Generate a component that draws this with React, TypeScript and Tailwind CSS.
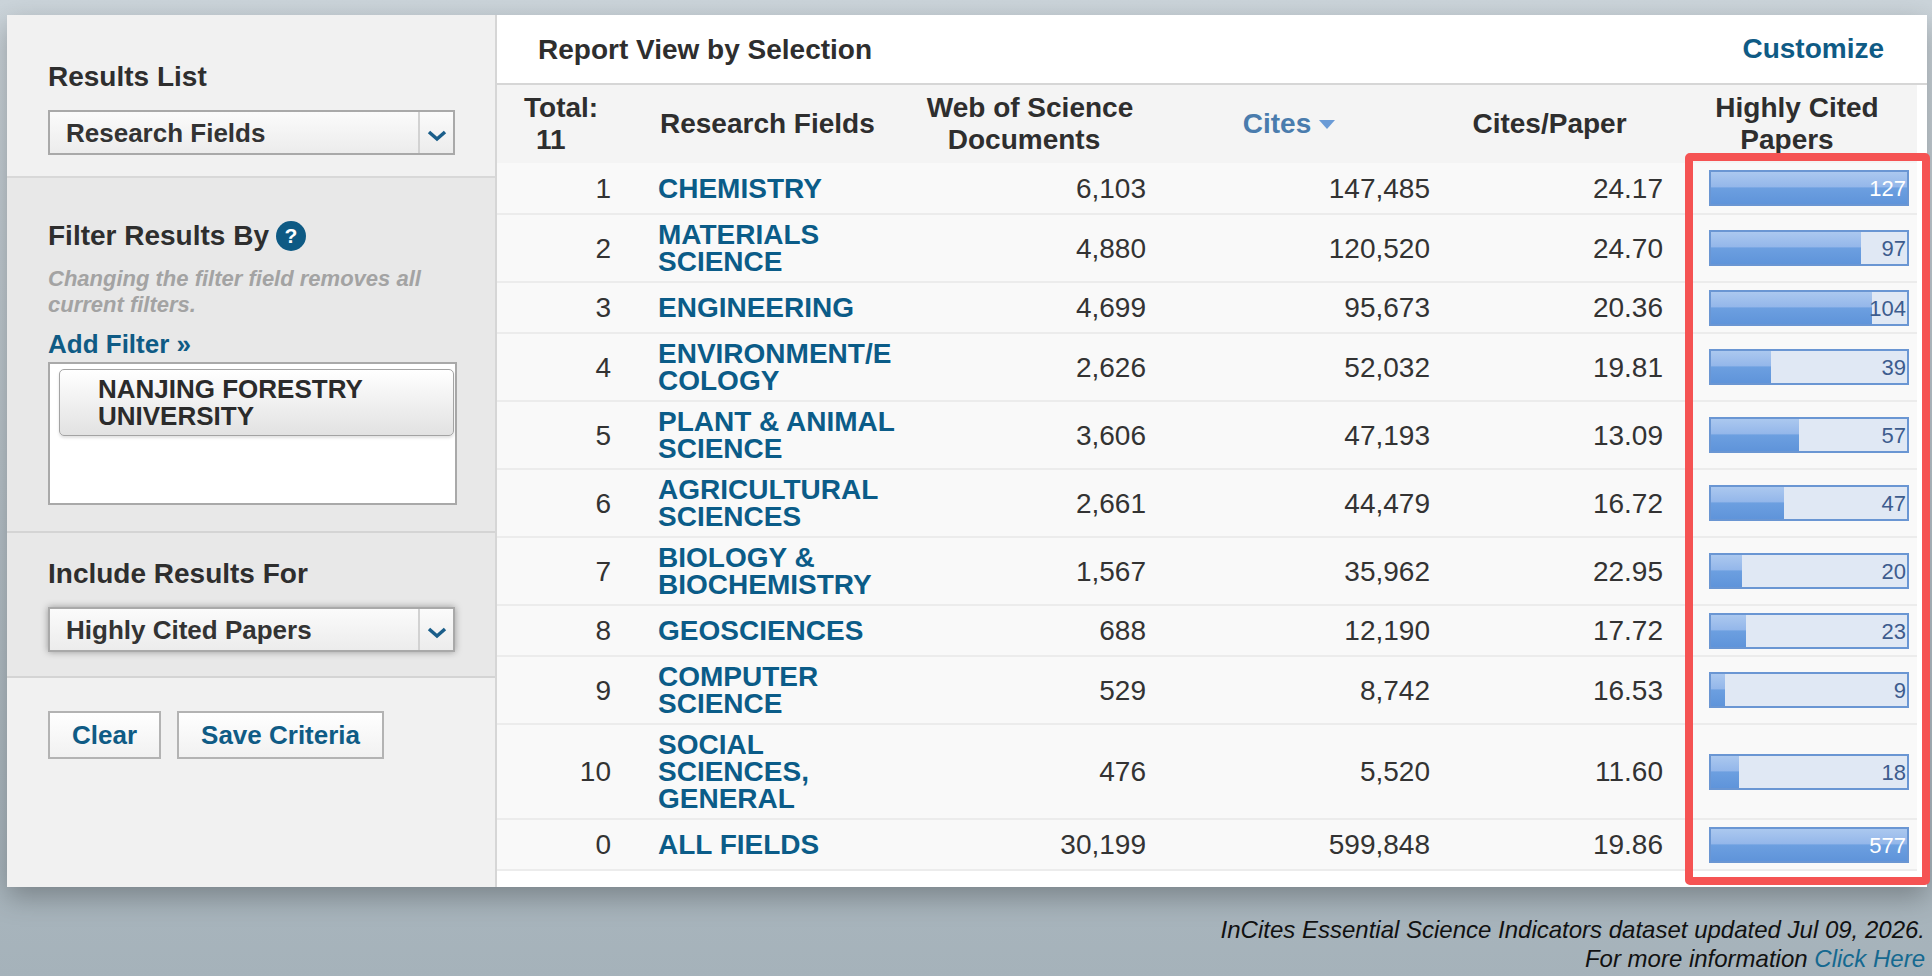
import React from 'react';

type Row = {
    rank: number;
    field: string[];
    docs: string;
    cites: string;
    cpp: string;
    hc: number;
    max: number;
};

const ROWS: Row[] = [
    { rank: 1, field: ['CHEMISTRY'], docs: '6,103', cites: '147,485', cpp: '24.17', hc: 127, max: 127 },
    { rank: 2, field: ['MATERIALS', 'SCIENCE'], docs: '4,880', cites: '120,520', cpp: '24.70', hc: 97, max: 127 },
    { rank: 3, field: ['ENGINEERING'], docs: '4,699', cites: '95,673', cpp: '20.36', hc: 104, max: 127 },
    { rank: 4, field: ['ENVIRONMENT/E', 'COLOGY'], docs: '2,626', cites: '52,032', cpp: '19.81', hc: 39, max: 127 },
    { rank: 5, field: ['PLANT & ANIMAL', 'SCIENCE'], docs: '3,606', cites: '47,193', cpp: '13.09', hc: 57, max: 127 },
    { rank: 6, field: ['AGRICULTURAL', 'SCIENCES'], docs: '2,661', cites: '44,479', cpp: '16.72', hc: 47, max: 127 },
    { rank: 7, field: ['BIOLOGY &', 'BIOCHEMISTRY'], docs: '1,567', cites: '35,962', cpp: '22.95', hc: 20, max: 127 },
    { rank: 8, field: ['GEOSCIENCES'], docs: '688', cites: '12,190', cpp: '17.72', hc: 23, max: 127 },
    { rank: 9, field: ['COMPUTER', 'SCIENCE'], docs: '529', cites: '8,742', cpp: '16.53', hc: 9, max: 127 },
    { rank: 10, field: ['SOCIAL', 'SCIENCES,', 'GENERAL'], docs: '476', cites: '5,520', cpp: '11.60', hc: 18, max: 127 },
    { rank: 0, field: ['ALL FIELDS'], docs: '30,199', cites: '599,848', cpp: '19.86', hc: 577, max: 577 },
];

const Chevron: React.FC = () => (
    <svg width="22" height="14" viewBox="0 0 22 14">
        <polyline points="3,4 11,11 19,4" fill="none" stroke="#1b5e8a" strokeWidth="3.5" strokeLinejoin="miter" />
    </svg>
);

const FakeSelect: React.FC<{ label: string; shadow?: boolean }> = ({ label, shadow }) => (
    <div className={`flex w-[407px] h-[45px] border-2 border-[#a9a9a9] bg-gradient-to-b from-[#fbfbfb] to-[#ececec] ${shadow ? 'shadow-[0_0_7px_rgba(0,0,0,0.35)]' : ''}`}>
        <div className="flex-1 flex items-center pl-[16px] pt-[2px] text-[26px] font-bold text-[#333]">{label}</div>
        <div className="w-[35px] border-l-2 border-[#d2d2d2] flex items-center justify-center pt-[4px]">
            <Chevron />
        </div>
    </div>
);

const SideButton: React.FC<{ label: string }> = ({ label }) => (
    <button className="h-[48px] px-[22px] border-2 border-[#b3b3b3] bg-gradient-to-b from-white to-[#f1f1f1] text-[26px] font-bold text-[#0f5b85]">
        {label}
    </button>
);

const HcBar: React.FC<{ value: number; max: number }> = ({ value, max }) => {
    const pct = Math.min(100, (value / max) * 100);
    const full = pct > 95;
    return (
        <div className="relative w-[200px] h-[36px] border-2 border-[#6a96d3] bg-[#e0e8f4]">
            <div
                className="absolute left-0 top-0 bottom-0 bg-[linear-gradient(to_bottom,#abc8ef_0%,#94b7ea_46%,#6c9fe0_50%,#5f94da_100%)]"
                style={{ width: `${pct}%` }}
            />
            <div className={`relative text-right pr-[1px] text-[22px] leading-[33px] ${full ? 'text-white' : 'text-[#3d5c8e]'}`}>{value}</div>
        </div>
    );
};

const App: React.FC = () => {
    return (
        <div className="relative w-[1932px] min-h-[976px] bg-gradient-to-b from-[#cbd4da] to-[#a5b2ba] pt-[15px] pl-[7px] pr-[5px] font-['Liberation_Sans',Arial,sans-serif] text-[#333] overflow-hidden">
            <div className="flex h-[872px] shadow-[0_10px_26px_rgba(0,0,0,0.28)]">
                {/* sidebar */}
                <aside className="w-[490px] flex flex-col border-r-2 border-[#d6d6d6]">
                    <section className="h-[163px] bg-[#f1f1f1] border-b-2 border-[#d8d8d8] pl-[41px] pt-[46px]">
                        <h2 className="text-[28px] leading-[32px] font-bold text-[#2e2e2e]">Results List</h2>
                        <div className="mt-[17px]">
                            <FakeSelect label="Research Fields" />
                        </div>
                    </section>

                    <section className="h-[355px] bg-[#e8e8e8] border-b-2 border-[#d4d4d4] pl-[41px] pt-[42px]">
                        <div className="flex items-center">
                            <h2 className="text-[28px] leading-[32px] font-bold text-[#2e2e2e]">Filter Results By</h2>
                            <span className="ml-[7px] w-[30px] h-[30px] rounded-full bg-[#0e5a84] text-white text-[21px] font-bold flex items-center justify-center">?</span>
                        </div>
                        <p className="mt-[14px] w-[410px] text-[22px] leading-[26px] font-bold italic text-[#a3a3a3]">
                            Changing the filter field removes all current filters.
                        </p>
                        <a className="block mt-[11px] text-[26px] leading-[30px] font-bold text-[#0f5b85]">Add Filter »</a>
                        <div className="mt-[3px] w-[409px] h-[143px] border-2 border-[#a9a9a9] bg-white pl-[9px] pt-[5px] pr-[1px]">
                            <div className="h-[67px] rounded-[5px] border-[1.5px] border-[#a3a3a3] bg-gradient-to-b from-white to-[#e2e2e2] shadow-[0_2px_3px_rgba(0,0,0,0.12)] pl-[38px] pt-[6px] text-[26px] leading-[27px] font-bold text-[#2b2b2b]">
                                NANJING FORESTRY<br />UNIVERSITY
                            </div>
                        </div>
                    </section>

                    <section className="h-[145px] bg-[#e8e8e8] border-b-2 border-[#d4d4d4] pl-[41px] pt-[25px]">
                        <h2 className="text-[28px] leading-[32px] font-bold text-[#2e2e2e]">Include Results For</h2>
                        <div className="mt-[17px]">
                            <FakeSelect label="Highly Cited Papers" shadow />
                        </div>
                    </section>

                    <section className="flex-1 bg-[#f1f1f1] pl-[41px] pt-[33px]">
                        <div className="flex gap-[16px]">
                            <SideButton label="Clear" />
                            <SideButton label="Save Criteria" />
                        </div>
                    </section>
                </aside>

                {/* report */}
                <main className="flex-1 bg-white flex flex-col">
                    <div className="h-[70px] flex items-center justify-between pl-[41px] pr-[43px] border-b-2 border-[#d6d6d6]">
                        <h1 className="text-[28px] font-bold text-[#2e2e2e] pt-[2px]">Report View by Selection</h1>
                        <a className="text-[28px] font-bold text-[#0f5b85]">Customize</a>
                    </div>
                    <table className="table-fixed border-collapse w-[1420px]">
                        <colgroup>
                            <col className="w-[138px]" />
                            <col className="w-[285px]" />
                            <col className="w-[240px]" />
                            <col className="w-[284px]" />
                            <col className="w-[233px]" />
                            <col className="w-[240px]" />
                        </colgroup>
                        <thead>
                            <tr className="h-[78px] bg-[#f4f4f4] text-[28px] leading-[32px] font-bold text-[#2e2e2e]">
                                <th className="text-left pl-[27px] font-bold">
                                    Total:<br /><span className="pl-[12px]">11</span>
                                </th>
                                <th className="text-left pl-[25px] font-bold">Research Fields</th>
                                <th className="text-center pr-[20px] font-bold">
                                    Web of Science<br /><span className="pr-[12px]">Documents</span>
                                </th>
                                <th className="text-center pr-[26px] font-bold text-[#4a7cad]">
                                    <span className="inline-flex items-center gap-[8px]">
                                        Cites
                                        <svg width="16" height="9" viewBox="0 0 16 9">
                                            <polygon points="0,0 16,0 8,9" fill="#6a9bd6" />
                                        </svg>
                                    </span>
                                </th>
                                <th className="text-center pr-[22px] font-bold">Cites/Paper</th>
                                <th className="text-center font-bold">
                                    Highly Cited<br /><span className="pr-[20px]">Papers</span>
                                </th>
                            </tr>
                        </thead>
                        <tbody>
                            {ROWS.map(row => (
                                <tr key={row.rank} className={`bg-[#f9f9f9] text-[28px] leading-[27px] ${row.field.length === 1 ? 'h-[51px]' : ''}`}>
                                    <td className="border-b-2 border-[#ececec] py-[6px] text-right pr-[24px] align-middle">{row.rank}</td>
                                    <td className="border-b-2 border-[#ececec] py-[6px] pl-[23px] font-bold text-[#0b5c88] whitespace-nowrap align-middle">
                                        {row.field.map((line, i) => (
                                            <div key={i}>{line}</div>
                                        ))}
                                    </td>
                                    <td className="border-b-2 border-[#ececec] py-[6px] text-right pr-[14px] align-middle">{row.docs}</td>
                                    <td className="border-b-2 border-[#ececec] py-[6px] text-right pr-[14px] align-middle">{row.cites}</td>
                                    <td className="border-b-2 border-[#ececec] py-[6px] text-right pr-[14px] align-middle">{row.cpp}</td>
                                    <td className="border-b-2 border-[#ececec] py-[6px] pl-[32px] pr-[8px] align-middle">
                                        <HcBar value={row.hc} max={row.max} />
                                    </td>
                                </tr>
                            ))}
                        </tbody>
                    </table>
                </main>
            </div>

            <div className="mt-[28px] pr-[2px] text-right text-[24px] leading-[29px] italic text-[#111]">
                <p>InCites Essential Science Indicators dataset updated Jul 09, 2026.</p>
                <p>For more information <a className="text-[#156990]">Click Here</a></p>
            </div>

            {/* highlight annotation */}
            <div className="absolute left-[1685px] top-[153px] w-[245px] h-[732px] border-[8px] border-[#f55353] rounded-[5px] pointer-events-none" />
        </div>
    );
};

export default App;
